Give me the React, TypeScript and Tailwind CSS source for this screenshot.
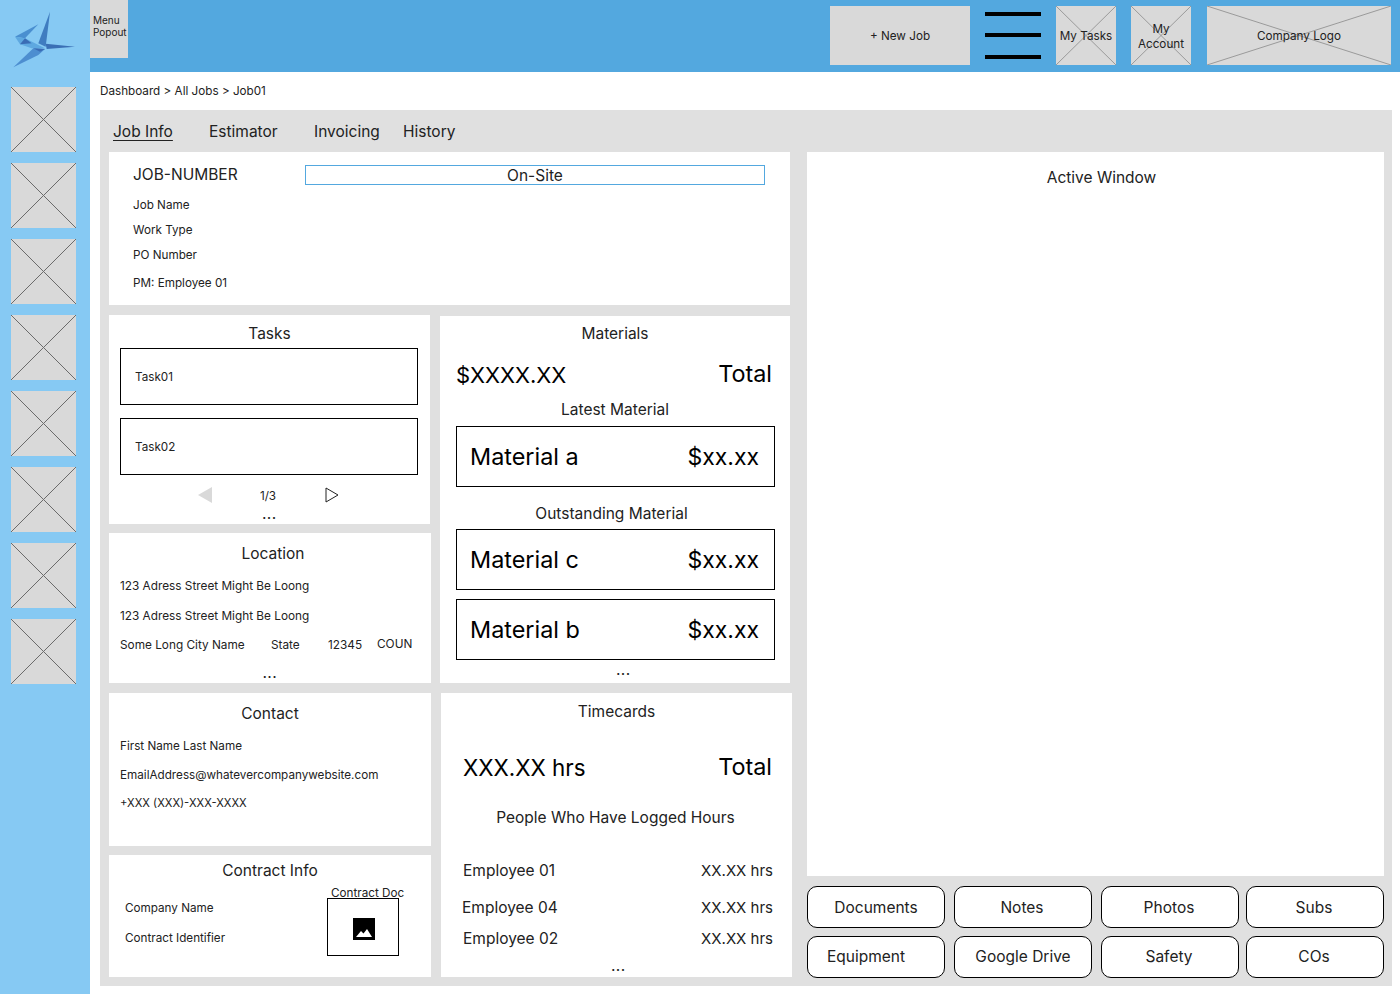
const font = "font-['Inter',sans-serif]";

function CrossBox({ className, line = "#6b6b6b", children }: { className: string; line?: string; children?: React.ReactNode }) {
  return (
    <div className={`relative bg-[#d9d9d9] shrink-0 flex items-center justify-center text-center ${className}`}>
      <svg className="absolute inset-0 size-full" preserveAspectRatio="none" viewBox="0 0 100 100">
        <line x1="0" y1="0" x2="100" y2="100" stroke={line} strokeWidth="1" vectorEffect="non-scaling-stroke" />
        <line x1="100" y1="0" x2="0" y2="100" stroke={line} strokeWidth="1" vectorEffect="non-scaling-stroke" />
      </svg>
      {children && <span className="relative pt-[2px] text-[11.7px] leading-[15px] text-[#222]">{children}</span>}
    </div>
  );
}

function Logo() {
  return (
    <svg className="w-[80px] h-[70px]" viewBox="0 0 240 210">
      <path d="M135 20 L100 115 L122 125 Z" fill="#3f7cc0" />
      <path d="M100 58 L30 95 L60 100 Z" fill="#4a8fd0" />
      <path d="M30 95 L60 100 L120 130 L80 130 L45 118 Z" fill="#5ea8e0" />
      <path d="M45 118 L60 100 L80 115 Z" fill="#3a6cb5" />
      <path d="M122 116 L210 125 L125 132 Z" fill="#3a6fb5" />
      <path d="M25 187 L85 130 L120 132 L100 150 Z" fill="#4d8ed0" />
      <path d="M85 130 L120 132 L105 140 Z" fill="#3a6cb5" />
    </svg>
  );
}

function Sidebar() {
  return (
    <aside className="w-[90px] shrink-0 bg-[#86c9f3] flex flex-col items-center">
      <div className="h-[87px] w-full pl-[5px] pt-[5px]">
        <Logo />
      </div>
      <div className="flex flex-col gap-[11px] mr-[3px]">
        {[1, 2, 3, 4, 5, 6, 7, 8].map((n) => (
          <CrossBox key={n} className="size-[65px]" />
        ))}
      </div>
    </aside>
  );
}

function TopBar() {
  return (
    <header className="h-[72px] bg-[#53a8df] flex items-start">
      <div className="w-[38px] h-[58px] bg-[#d9d9d9] pl-[3px] pt-[14px] text-[10px] leading-[12px] text-[#222]">
        Menu Popout
      </div>
      <div className="ml-auto flex items-center pt-[6px] pr-[9px]">
        <div className="w-[140px] h-[59px] bg-[#d9d9d9] pt-[2px] flex items-center justify-center text-[11.7px] text-[#222]">
          + New Job
        </div>
        <div className="w-[56px] h-[47px] ml-[15px] -mt-[1px] flex flex-col justify-between">
          <div className="h-[4px] bg-black" />
          <div className="h-[4px] bg-black" />
          <div className="h-[4px] bg-black" />
        </div>
        <CrossBox className="w-[60px] h-[59px] ml-[15px]" line="#9a9a9a">My Tasks</CrossBox>
        <CrossBox className="w-[60px] h-[59px] ml-[15px]" line="#9a9a9a">
          My
          <br />
          Account
        </CrossBox>
        <CrossBox className="w-[184px] h-[59px] ml-[16px]" line="#9a9a9a">Company Logo</CrossBox>
      </div>
    </header>
  );
}

function Card({ className, children }: { className: string; children: React.ReactNode }) {
  return <section className={`bg-white shrink-0 text-[#222] ${className}`}>{children}</section>;
}

function Dots() {
  return <div className="text-center text-[12px] leading-[10px] font-bold text-[#222] tracking-[0.8px]">...</div>;
}

function TabBar() {
  return (
    <nav className="h-[42px] flex items-center text-[15.5px] text-[#222] pl-[4px] pt-[2px]">
      <span className="underline underline-offset-[3px] w-[96px]">Job Info</span>
      <span className="w-[105px]">Estimator</span>
      <span className="w-[89px]">Invoicing</span>
      <span>History</span>
    </nav>
  );
}

function JobCard() {
  return (
    <Card className="h-[153px] w-[681px] pl-[24px] text-[11.7px]">
      <div className="flex items-center pt-[12px] h-[34px]">
        <span className="w-[172px] text-[15.5px]">JOB-NUMBER</span>
        <div className="w-[460px] h-[20px] border border-[#53a8df] pt-[1px] flex items-center justify-center text-[15.5px] leading-none">
          On-Site
        </div>
      </div>
      <div className="flex flex-col pt-[7px]">
        <p className="h-[25px] leading-[25px]">Job Name</p>
        <p className="h-[25px] leading-[25px]">Work Type</p>
        <p className="h-[27px] leading-[25px]">PO Number</p>
        <p className="leading-[26px]">PM: Employee 01</p>
      </div>
    </Card>
  );
}

function TaskRow({ label }: { label: string }) {
  return (
    <div className="h-[57px] w-[298px] border border-black pt-[2px] flex items-center pl-[14px] text-[11.7px]">{label}</div>
  );
}

function TasksCard() {
  return (
    <Card className="h-[209px] w-[321px] px-[11px]">
      <h2 className="text-center text-[15.5px] h-[33px] leading-[37px]">Tasks</h2>
      <div className="flex flex-col gap-[13px]">
        <TaskRow label="Task01" />
        <TaskRow label="Task02" />
      </div>
      <div className="flex items-center justify-center h-[40px] text-[11.7px] pt-[4px]">
        <svg className="w-[14px] h-[16px] -mt-[4px] -ml-[2px]" viewBox="0 0 14 16">
          <path d="M14 0 V16 L0 8 Z" fill="#d9d9d9" />
        </svg>
        <span className="ml-[48px] mr-[49px]">1/3</span>
        <svg className="w-[14px] h-[16px] -mt-[4px]" viewBox="0 0 14 16">
          <path d="M1 1 V15 L13 8 Z" fill="none" stroke="#222" />
        </svg>
      </div>
      <div className="-mt-[5px]">
        <Dots />
      </div>
    </Card>
  );
}

function LocationCard() {
  return (
    <Card className="h-[150px] w-[322px] px-[11px] text-[11.8px]">
      <h2 className="text-center text-[15.5px] h-[40px] leading-[42px] ml-[6px]">Location</h2>
      <p className="h-[30px] leading-[26px]">123 Adress Street Might Be Loong</p>
      <p className="h-[30px] leading-[26px]">123 Adress Street Might Be Loong</p>
      <div className="flex h-[30px] leading-[24px]">
        <span className="w-[151px]">Some Long City Name</span>
        <span className="w-[57px]">State</span>
        <span className="w-[49px]">12345</span>
        <span className="-mt-[1px]">COUN</span>
      </div>
      <div className="pt-[6px]">
        <Dots />
      </div>
    </Card>
  );
}

function ContactCard() {
  return (
    <Card className="h-[153px] w-[322px] px-[11px] text-[11.7px]">
      <h2 className="text-center text-[15.5px] h-[41px] leading-[42px]">Contact</h2>
      <p className="h-[28px] leading-[24px]">First Name Last Name</p>
      <p className="h-[29px] leading-[26px]">EmailAddress@whatevercompanywebsite.com</p>
      <p className="leading-[24px] text-[11.2px]">+XXX (XXX)-XXX-XXXX</p>
    </Card>
  );
}

function ContractCard() {
  return (
    <Card className="h-[122px] w-[322px] text-[11.7px]">
      <h2 className="text-center text-[15.5px] h-[32px] leading-[31px]">Contract Info</h2>
      <div className="flex justify-between pl-[16px] pr-[32px]">
        <div className="pt-[9px]">
          <p className="h-[30px] leading-[24px]">Company Name</p>
          <p className="leading-[24px]">Contract Identifier</p>
        </div>
        <div className="w-[72px]">
          <div className="h-[11px] pl-[4px] leading-[12px] whitespace-nowrap">Contract Doc</div>
          <div className="h-[58px] border border-black flex items-center justify-center">
            <svg className="size-[22px] ml-[2px] mt-[3px]" viewBox="0 0 22 22">
              <path d="M0 0 H22 V22 H0 Z" fill="#000" />
              <path d="M3 19 L8 13 L10.5 15.5 L14 11 L19 19 Z" fill="#fff" />
            </svg>
          </div>
        </div>
      </div>
    </Card>
  );
}

function PriceRow({ name, className }: { name: string; className?: string }) {
  return (
    <div className={`h-[61px] border border-black flex items-center justify-between pl-[13px] pr-[15px] text-[23.4px] text-black ${className ?? ""}`}>
      <span>{name}</span>
      <span className="text-[23px] mt-[2px]">$xx.xx</span>
    </div>
  );
}

function MaterialsCard() {
  return (
    <Card className="h-[367px] w-[350px] pl-[16px] pr-[15px]">
      <h2 className="text-center text-[15.5px] h-[35px] leading-[35px] pr-[1px]">Materials</h2>
      <div className="flex justify-between items-center h-[47px] text-[23.4px] text-black pr-[3px]">
        <span className="text-[22px] mt-[2px]">$XXXX.XX</span>
        <span className="-mt-[2px]">Total</span>
      </div>
      <h3 className="text-center text-[15.5px] h-[28px] leading-[24px] pr-[1px]">Latest Material</h3>
      <PriceRow name="Material a" />
      <h3 className="text-center text-[15.5px] h-[42px] leading-[54px] pr-[8px]">Outstanding Material</h3>
      <PriceRow name="Material c" />
      <PriceRow name="Material b" className="mt-[9px]" />
      <div className="pt-[6px] pl-[16px]">
        <Dots />
      </div>
    </Card>
  );
}

function HoursRow({ name, className }: { name: string; className: string }) {
  return (
    <div className={`flex justify-between items-center text-[15.5px] pl-[22px] pr-[19px] ${className}`}>
      <span>{name}</span>
      <span className="text-[15px]">XX.XX hrs</span>
    </div>
  );
}

function TimecardsCard() {
  return (
    <Card className="h-[284px] w-[351px]">
      <h2 className="text-center text-[15.5px] h-[36px] leading-[38px]">Timecards</h2>
      <div className="flex justify-between items-center h-[77px] text-[23.4px] text-black pl-[22px] pr-[20px]">
        <span className="text-[22.4px]">XXX.XX hrs</span>
        <span className="-mt-[2px]">Total</span>
      </div>
      <h3 className="text-center text-[15.5px] h-[48px] leading-[23px] pr-[2px]">People Who Have Logged Hours</h3>
      <HoursRow name="Employee 01" className="h-[34px]" />
      <HoursRow name="Employee 04" className="h-[38px] -ml-[1px] pt-[2px]" />
      <HoursRow name="Employee 02" className="h-[26px]" />
      <div className="mt-[10px] pl-[4px]">
        <Dots />
      </div>
    </Card>
  );
}

const buttons = [
  { label: "Documents", className: "pt-[2px]" },
  { label: "Notes", className: "pt-[2px] pr-[2px]" },
  { label: "Photos", className: "pt-[2px] pr-[2px]" },
  { label: "Subs", className: "pt-[2px] pr-[2px]" },
  { label: "Equipment", className: "pr-[20px]" },
  { label: "Google Drive", className: "" },
  { label: "Safety", className: "pr-[2px]" },
  { label: "COs", className: "pr-[2px]" },
];

function ButtonGrid() {
  return (
    <div className="grid grid-cols-[147px_147px_145px_138px] gap-y-[8px] mt-[10px]">
      {buttons.map((b) => (
        <div key={b.label} className={`w-[138px] h-[42px] bg-white border border-black rounded-[10px] flex items-center justify-center text-[15.5px] text-[#222] ${b.className}`}>
          {b.label}
        </div>
      ))}
    </div>
  );
}

export default function App() {
  return (
    <div className={`flex w-[1400px] h-[994px] overflow-hidden bg-white ${font}`}>
      <Sidebar />
      <main className="flex-1 flex flex-col">
        <TopBar />
        <div className="h-[38px] flex items-center pl-[10px] pt-[1px] text-[11.7px] text-[#222]">Dashboard &gt; All Jobs &gt; Job01</div>
        <div className="w-[1292px] h-[876px] ml-[10px] bg-[#e0e0e0] px-[9px]">
          <TabBar />
          <div className="flex">
            <div className="w-[682px] flex flex-col gap-[10px]">
              <JobCard />
              <div className="flex gap-[9px]">
                <div className="flex flex-col gap-[9px]">
                  <TasksCard />
                  <LocationCard />
                  <div className="mt-[1px]">
                    <ContactCard />
                  </div>
                  <ContractCard />
                </div>
                <div className="flex flex-col gap-[10px] pt-[1px]">
                  <MaterialsCard />
                  <div className="ml-[1px]">
                    <TimecardsCard />
                  </div>
                </div>
              </div>
            </div>
            <div className="w-[577px] ml-[16px]">
              <div className="h-[724px] bg-white text-center text-[15.5px] text-[#222] pt-[14px] pl-[12px]">Active Window</div>
              <ButtonGrid />
            </div>
          </div>
        </div>
      </main>
    </div>
  );
}
